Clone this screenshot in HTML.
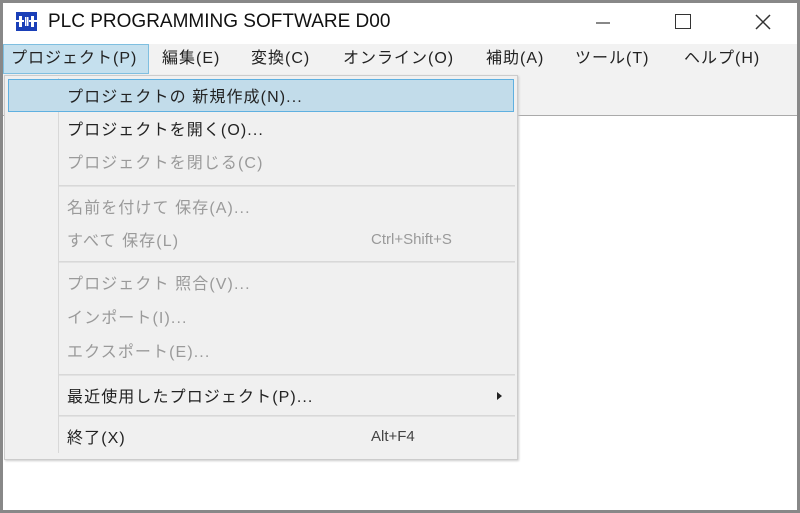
<!DOCTYPE html>
<html><head><meta charset="utf-8"><style>
*{margin:0;padding:0;box-sizing:border-box}
body{width:800px;height:513px;background:#888;position:relative;overflow:hidden;font-family:"Liberation Sans","Noto Sans CJK JP",sans-serif}
.win{position:absolute;left:3px;top:3px;width:794px;height:507px;background:#fff}
.a{position:absolute;white-space:nowrap}
.mb{position:absolute;left:0;top:41px;width:794px;height:72px;background:#f2f2f2;border-bottom:1px solid #aaa}
.mi{position:absolute;top:41px;font-size:16px;color:#222;letter-spacing:1px}
.menu{position:absolute;left:4px;top:75px;width:514px;height:385px;background:#f0f0f0;border:1px solid #ccc;box-shadow:1px 1px 2px #ccc}
.col{position:absolute;left:53px;top:2px;width:1px;height:375px;background:#d8d8d8}
.it{position:absolute;left:62px;font-size:16px;letter-spacing:1.1px}
.d{color:#222}.g{color:#9a9a9a}
.sep{position:absolute;left:54px;width:456px;height:2px;background:#e2e2e2;border-top:1px solid #d8d8d8}
</style></head><body>
<div class="win">
<svg class="a" style="left:13px;top:9px" width="21" height="19" viewBox="0 0 21 19"><rect width="21" height="19" fill="#1a3fb8"/><rect x="3" y="4" width="3" height="11" fill="#fff"/><rect x="15" y="4" width="3" height="11" fill="#fff"/><rect x="0" y="8" width="8" height="2" fill="#fff"/><rect x="13" y="8" width="8" height="2" fill="#fff"/><rect x="9" y="5" width="1.5" height="9" fill="#fff"/><rect x="11" y="5" width="1.5" height="9" fill="#fff"/></svg>
<div class="a" style="left:45px;top:8px;font-size:19px;color:#111">PLC PROGRAMMING SOFTWARE D00</div>
<div class="a" style="left:593px;top:19px;width:14px;height:2px;background:#888"></div>
<div class="a" style="left:672px;top:11px;width:16px;height:15px;border:1.5px solid #333"></div>
<svg class="a" style="left:751px;top:10px" width="18" height="18"><path d="M2 2L16 16M16 2L2 16" stroke="#333" stroke-width="1.5"/></svg>
<div class="mb"></div>
<div class="a" style="left:0px;top:41px;width:146px;height:30px;background:#c5e0ee;border:1px solid #7fbfe0"></div>
<div class="mi" style="left:8px">プロジェクト(P)</div>
<div class="mi" style="left:159px">編集(E)</div>
<div class="mi" style="left:248px">変換(C)</div>
<div class="mi" style="left:340px">オンライン(O)</div>
<div class="mi" style="left:483px">補助(A)</div>
<div class="mi" style="left:572px">ツール(T)</div>
<div class="mi" style="left:681px">ヘルプ(H)</div>
</div>
<div class="menu">
<div class="col"></div>
<div class="a" style="left:3px;top:3px;width:506px;height:33px;background:#c2dcea;border:1px solid #5fb0e0"></div>
<div class="it d" style="top:7px">プロジェクトの 新規作成(N)...</div>
<div class="it d" style="top:40px">プロジェクトを開く(O)...</div>
<div class="it g" style="top:73px">プロジェクトを閉じる(C)</div>
<div class="sep" style="top:109px"></div>
<div class="it g" style="top:118px">名前を付けて 保存(A)...</div>
<div class="it g" style="top:151px">すべて 保存(L)</div>
<div class="a g" style="left:366px;top:155px;font-size:15px">Ctrl+Shift+S</div>
<div class="sep" style="top:185px"></div>
<div class="it g" style="top:194px">プロジェクト 照合(V)...</div>
<div class="it g" style="top:228px">インポート(I)...</div>
<div class="it g" style="top:262px">エクスポート(E)...</div>
<div class="sep" style="top:298px"></div>
<div class="it d" style="top:307px">最近使用したプロジェクト(P)...</div>
<div class="a" style="left:492px;top:316px;width:0;height:0;border-left:5px solid #222;border-top:4px solid transparent;border-bottom:4px solid transparent"></div>
<div class="sep" style="top:339px"></div>
<div class="it d" style="top:348px">終了(X)</div>
<div class="a d" style="left:366px;top:352px;font-size:15px;color:#444">Alt+F4</div>
</div>
</body></html>
